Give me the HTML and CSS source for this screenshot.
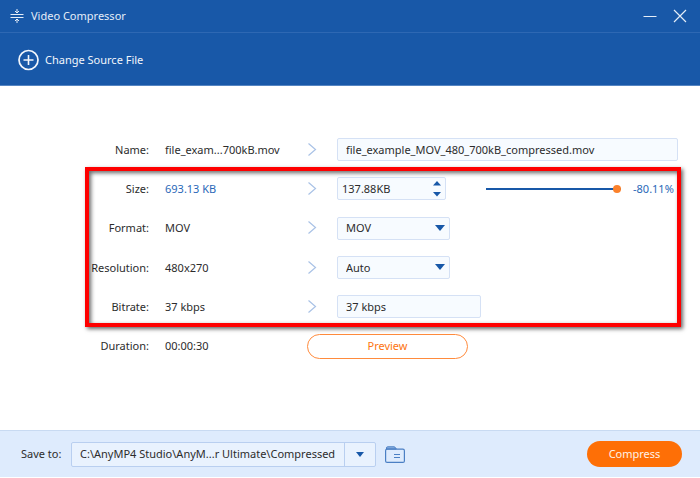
FILE: index.html
```html
<!DOCTYPE html>
<html lang="en">
<head>
    <meta charset="UTF-8">
    <meta name="viewport" content="width=device-width, initial-scale=1.0">
    <title>Video Compressor</title>
    <link rel="stylesheet" href="styles.css">
</head>
<body>
    <!-- Title bar -->
    <header class="titlebar">
        <svg class="app-icon" width="14" height="14" viewBox="0 0 14 14" fill="none" stroke="currentColor">
            <path d="M0.5 5.5h13M0.5 8.5h13M7 0v4M7 14v-4M5 2l2 2 2-2M5 12l2-2 2 2"/>
        </svg>
        <h1>Video Compressor</h1>
        <button type="button" class="window-btn" aria-label="Minimize">
            <svg width="14" height="14" viewBox="0 0 14 14" fill="none" stroke="currentColor"><path d="M0.5 7.5h13"/></svg>
        </button>
        <button type="button" class="window-btn" aria-label="Close">
            <svg width="14" height="14" viewBox="0 0 14 14" fill="none" stroke="currentColor" stroke-width="1.2"><path d="M1 1l12 12M13 1L1 13"/></svg>
        </button>
    </header>

    <!-- Toolbar -->
    <div class="toolbar">
        <button type="button" class="source-btn">
            <svg width="21" height="22" viewBox="0 0 21 22" fill="none" stroke="currentColor">
                <circle cx="10.5" cy="11" r="9.5" stroke-width="1.7"/>
                <path d="M10.5 6v10M5.5 11h10" stroke-width="1.6"/>
            </svg>
            Change Source File
        </button>
    </div>

    <!-- Settings -->
    <main class="settings">
        <div class="row">
            <label class="name" for="file-name">Name:</label>
            <span>file_exam...700kB.mov</span>
            <svg class="arrow" width="10" height="14" viewBox="0 0 10 14"><path d="M1.5 0.5l7 6-7 6"/></svg>
            <input type="text" class="field" id="file-name" value="file_example_MOV_480_700kB_compressed.mov">
        </div>
        <div class="row">
            <label class="name" for="size">Size:</label>
            <span class="blue">693.13 KB</span>
            <svg class="arrow" width="10" height="14" viewBox="0 0 10 14"><path d="M1.5 0.5l7 6-7 6"/></svg>
            <div class="size-controls">
                <div class="spinner">
                    <input type="text" id="size" value="137.88KB">
                    <div class="spinner-buttons">
                        <button type="button" aria-label="Increase size"><svg width="8" height="5" viewBox="0 0 8 5"><path d="M0 4.5l4-4.5 4 4.5z"/></svg></button>
                        <button type="button" aria-label="Decrease size"><svg width="8" height="5" viewBox="0 0 8 5"><path d="M0 0l4 4.5 4-4.5z"/></svg></button>
                    </div>
                </div>
                <input type="range" class="slider" id="ratio" min="0" max="100" value="100" aria-label="Compression ratio">
                <output class="blue" for="ratio">-80.11%</output>
            </div>
        </div>
        <div class="row">
            <label class="name" for="format">Format:</label>
            <span>MOV</span>
            <svg class="arrow" width="10" height="14" viewBox="0 0 10 14"><path d="M1.5 0.5l7 6-7 6"/></svg>
            <div class="select">
                <select class="field" id="format">
                    <option>MOV</option>
                    <option>MP4</option>
                </select>
            </div>
        </div>
        <div class="row">
            <label class="name" for="resolution">Resolution:</label>
            <span>480x270</span>
            <svg class="arrow" width="10" height="14" viewBox="0 0 10 14"><path d="M1.5 0.5l7 6-7 6"/></svg>
            <div class="select">
                <select class="field" id="resolution">
                    <option>Auto</option>
                    <option>480x270</option>
                </select>
            </div>
        </div>
        <div class="row">
            <label class="name" for="bitrate">Bitrate:</label>
            <span>37 kbps</span>
            <svg class="arrow" width="10" height="14" viewBox="0 0 10 14"><path d="M1.5 0.5l7 6-7 6"/></svg>
            <input type="text" class="field bitrate" id="bitrate" value="37 kbps">
        </div>
        <div class="row">
            <span class="name">Duration:</span>
            <span>00:00:30</span>
            <button type="button" class="preview-btn">Preview</button>
        </div>
        <div class="highlight"></div>
    </main>

    <!-- Save location -->
    <footer class="footer">
        <label for="save-path">Save to:</label>
        <div class="path">
            <input type="text" id="save-path" value="C:\AnyMP4 Studio\AnyM...r Ultimate\Compressed">
            <button type="button" aria-label="Recent folders"><svg width="8" height="5" viewBox="0 0 8 5"><path d="M0 0l4 5 4-5z"/></svg></button>
        </div>
        <button type="button" class="folder-btn" aria-label="Open folder">
            <svg width="20" height="17" viewBox="0 0 20 17" fill="none" stroke="currentColor">
                <path d="M1.5 3V2Q1.5 0.8 2.7 0.8H9Q10 0.8 10.8 2.2L11.3 3z" fill="#8fb3e2"/>
                <rect x="0.6" y="3.2" width="18.8" height="13.2" rx="1.5" stroke-width="1.2"/>
                <path d="M9 8.5h6M9 11.5h6" stroke-width="1.2"/>
            </svg>
        </button>
        <button type="button" class="compress-btn">Compress</button>
    </footer>
</body>
</html>
```
FILE: styles.css
```css
* {
    box-sizing: border-box;
}
body {
    display: flex;
    flex-direction: column;
    min-height: 100vh;
    margin: 0;
    padding-bottom: 1px;
    background: #fff;
    color: #2c2c2c;
    font: 11px/16px Tahoma, "Noto Sans", sans-serif;
}
button, input, select {
    margin: 0;
    padding: 0;
    border: none;
    background: none;
    color: inherit;
    font: inherit;
}
button {
    cursor: pointer;
}
svg {
    display: block;
}
.titlebar {
    display: flex;
    align-items: center;
    height: 33px;
    padding: 0 12px 0 10px;
    border-bottom: 1px solid #2e68b3;
    background: #1858a8;
    color: #e4edf8;
}
.titlebar h1 {
    flex: 1;
    margin: 0 0 0 7px;
    font-size: 11px;
    font-weight: normal;
}
.window-btn {
    padding: 1px;
    margin-left: 14px;
}
.toolbar {
    display: flex;
    align-items: center;
    height: 53px;
    padding: 2px 18px 0;
    border-bottom: 1px solid #5585c2;
    background: #1858a8;
    color: #f2f6fc;
}
.source-btn {
    display: flex;
    align-items: center;
    gap: 6px;
}
.settings {
    position: relative;
    display: grid;
    grid-template-rows: repeat(6, 1fr);
    flex: 1;
    padding: 44px 22px 64px 0;
}
.row {
    display: grid;
    grid-template-columns: 149px 126px 14px 1fr;
    column-gap: 16px;
    align-items: center;
    white-space: nowrap;
}
.name {
    text-align: right;
}
.blue {
    color: #2a68b8;
}
.arrow {
    fill: none;
    stroke: #a9c2e6;
    stroke-width: 1.2;
}
.field {
    width: 100%;
    height: 23px;
    padding: 0 8px;
    border: 1px solid #d5e1f5;
    border-radius: 2px;
    background: #f7fbff;
}
.size-controls {
    display: flex;
    align-items: center;
}
.spinner {
    display: flex;
    width: 109px;
    height: 23px;
    border: 1px solid #d5e1f5;
    border-radius: 2px;
    background: #f7fbff;
}
.spinner input {
    flex: 1;
    min-width: 0;
    padding-left: 4px;
}
.spinner-buttons {
    display: flex;
    flex-direction: column;
    justify-content: space-around;
    padding: 0 4px;
}
.spinner-buttons svg, .path svg {
    fill: #1858a8;
}
.slider {
    appearance: none;
    flex: 1;
    min-width: 0;
    height: 8px;
    margin: 0 12px 0 40px;
    background: linear-gradient(#1858a8, #1858a8) center / 100% 2px no-repeat;
}
.slider::-webkit-slider-thumb {
    appearance: none;
    width: 8px;
    height: 8px;
    border-radius: 50%;
    background: #fb812b;
}
.size-controls output {
    width: 45px;
}
.select {
    position: relative;
    width: 113px;
}
.select::after {
    content: "";
    position: absolute;
    top: 8px;
    right: 5px;
    border: 5px solid transparent;
    border-top: 6px solid #1858a8;
    border-bottom: none;
    pointer-events: none;
}
.select select {
    display: block;
    appearance: none;
}
.bitrate {
    width: 144px;
}
.preview-btn {
    grid-column: 3 / 5;
    width: 161px;
    height: 25px;
    border: 1px solid #ff8b3d;
    border-radius: 13px;
    color: #fd7510;
}
/* Frame around the adjustable settings */
.highlight {
    position: absolute;
    grid-area: 2 / 1 / 6 / 2;
    inset: -2px -3px 0 85px;
    border: 4px solid #fe0000;
    box-shadow: 2px 2px 4px rgba(0, 0, 0, 0.6), inset 2px 2px 4px rgba(0, 0, 0, 0.6);
    pointer-events: none;
}
.footer {
    display: flex;
    align-items: center;
    height: 47px;
    padding: 0 18px 0 21px;
    border-top: 1px solid #c8daf2;
    background: #deebfd;
}
.footer label {
    width: 50px;
    white-space: nowrap;
}
.path {
    display: flex;
    width: 305px;
    height: 25px;
    margin-right: 9px;
    border: 1px solid #b9cff0;
    border-radius: 2px;
    background: #e9f2fe;
}
.path input {
    flex: 1;
    min-width: 0;
    padding-left: 8px;
}
.path button {
    display: grid;
    place-items: center;
    width: 31px;
    border-left: 1px solid #b9cff0;
}
.folder-btn {
    color: #4b7fc4;
}
.compress-btn {
    width: 95px;
    height: 26px;
    margin-left: auto;
    border-radius: 13px;
    background: #fe6f06;
    color: #fff2e8;
}
```
